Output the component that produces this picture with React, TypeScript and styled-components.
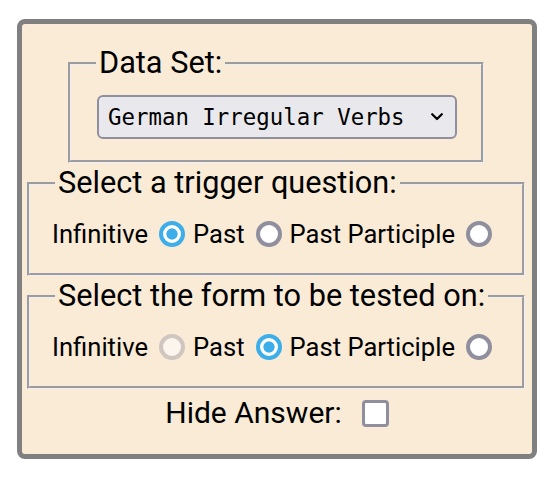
import React from "react";
import styled, { createGlobalStyle } from "styled-components";

const GlobalStyle = createGlobalStyle`
  html, body {
    margin: 0;
    padding: 0;
    background: #ffffff;
  }
  body {
    font-family: "Roboto", "Liberation Sans", sans-serif;
    color: #000000;
  }
`;

const Card = styled.div`
  box-sizing: border-box;
  width: 520px;
  margin: 19px 0 0 17px;
  padding: 21px 0 23px;
  border: 5px solid #808080;
  border-radius: 8px;
  background: #faebd7;
  display: flex;
  flex-direction: column;
`;

const Fieldset = styled.fieldset<{ $wide?: boolean }>`
  box-sizing: border-box;
  min-width: 0;
  margin: ${(p) => (p.$wide ? "2px 7px 0 5px" : "0 48px 0 46px")};
  padding: ${(p) => (p.$wide ? "18px 0 24px" : "14px 0 21px")};
  border: 3px groove #eeeef4;
`;

const Legend = styled.legend`
  margin-left: 25px;
  padding: 0 3px;
  font-size: 30.7px;
  line-height: 36px;
`;

const SelectWrap = styled.span`
  position: relative;
  display: block;
  width: 360px;
  margin-left: 26px;
`;

const Select = styled.select`
  appearance: none;
  -webkit-appearance: none;
  box-sizing: border-box;
  display: block;
  width: 360px;
  height: 44px;
  margin: 0;
  padding: 0 30px 0 9px;
  border: 2px solid #8f8f9d;
  border-radius: 6px;
  background: #e9e9ed;
  color: #000000;
  font-family: "DejaVu Sans Mono", "Liberation Mono", monospace;
  font-size: 22.4px;
  outline: none;
`;

const Chevron = styled.svg`
  position: absolute;
  right: 14px;
  top: 18px;
  width: 12px;
  height: 8px;
  pointer-events: none;
`;

const Row = styled.div`
  display: flex;
  justify-content: center;
  align-items: center;
  height: 30px;
  font-size: 25.6px;
  line-height: 30px;
`;

const Radio = styled.input.attrs({ type: "radio" })`
  appearance: none;
  -webkit-appearance: none;
  box-sizing: border-box;
  width: 26px;
  height: 26px;
  margin: 0 8px 0 11px;
  border: 4px solid #8f8f9d;
  border-radius: 50%;
  background: #ffffff;
  flex: none;

  &:checked {
    border-color: #3daee9;
    background: radial-gradient(circle, #3daee9 0 5.3px, #ffffff 5.9px);
  }

  &:disabled {
    border-color: #cfc6c0;
    background: #fcf5ee;
  }
`;

const HideRow = styled.div`
  display: flex;
  justify-content: center;
  align-items: center;
  height: 36px;
  margin-top: 6px;
  font-size: 30px;
  line-height: 36px;
`;

const Checkbox = styled.input.attrs({ type: "checkbox" })`
  appearance: none;
  -webkit-appearance: none;
  box-sizing: border-box;
  width: 27px;
  height: 27px;
  margin: 0 0 0 20px;
  border: 3.5px solid #8f8f9d;
  border-radius: 4px;
  background: #ffffff;
  flex: none;
`;

export default function App() {
  return (
    <>
      <GlobalStyle />
      <Card>
        <Fieldset>
          <Legend>Data Set:</Legend>
          <SelectWrap>
            <Select defaultValue="german">
              <option value="german">German Irregular Verbs</option>
            </Select>
            <Chevron viewBox="0 0 12 8">
              <polyline
                points="1.2,1.2 6,6 10.8,1.2"
                fill="none"
                stroke="#000"
                strokeWidth="2.2"
                strokeLinecap="round"
                strokeLinejoin="round"
              />
            </Chevron>
          </SelectWrap>
        </Fieldset>
        <Fieldset $wide>
          <Legend>Select a trigger question:</Legend>
          <Row>
            <span>Infinitive</span>
            <Radio name="trigger" defaultChecked />
            <span>Past</span>
            <Radio name="trigger" />
            <span>Past Participle</span>
            <Radio name="trigger" />
          </Row>
        </Fieldset>
        <Fieldset $wide>
          <Legend>Select the form to be tested on:</Legend>
          <Row>
            <span>Infinitive</span>
            <Radio name="tested" disabled />
            <span>Past</span>
            <Radio name="tested" defaultChecked />
            <span>Past Participle</span>
            <Radio name="tested" />
          </Row>
        </Fieldset>
        <HideRow>
          <span>Hide Answer:</span>
          <Checkbox />
        </HideRow>
      </Card>
    </>
  );
}
